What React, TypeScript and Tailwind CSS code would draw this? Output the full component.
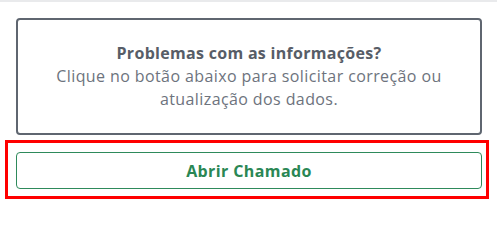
export default function App() {
  return (
    <div
      className="w-[497px] h-[204px] bg-white border-t-2 border-[#e9eaec] overflow-hidden"
      style={{ fontFamily: '"Open Sans", "Noto Sans", sans-serif' }}
    >
      {/* info card */}
      <div className="ml-4 mt-4 w-[466px] h-[117px] border-2 border-[#5f6670] rounded-[4px] flex flex-col items-center justify-center text-center text-[16px] leading-[23px]">
        <p className="font-bold text-[#575d67] tracking-[0.3px]">Problemas com as informações?</p>
        <p className="text-[#6d737d] tracking-[0.4px]">
          Clique no botão abaixo para solicitar correção ou
          <br />
          atualização dos dados.
        </p>
      </div>

      {/* highlighted action */}
      <div className="ml-[5px] mt-[5px] w-[484px] border-[3px] border-[#ff0000] pl-2 pr-1 pt-[9px] pb-[7px]">
        <button className="w-[466px] h-[37px] border border-[#2e8a5b] rounded-[4px] bg-white text-[16px] font-bold tracking-[0.4px] text-[#2a8754] flex items-center justify-center">
          Abrir Chamado
        </button>
      </div>
    </div>
  );
}
